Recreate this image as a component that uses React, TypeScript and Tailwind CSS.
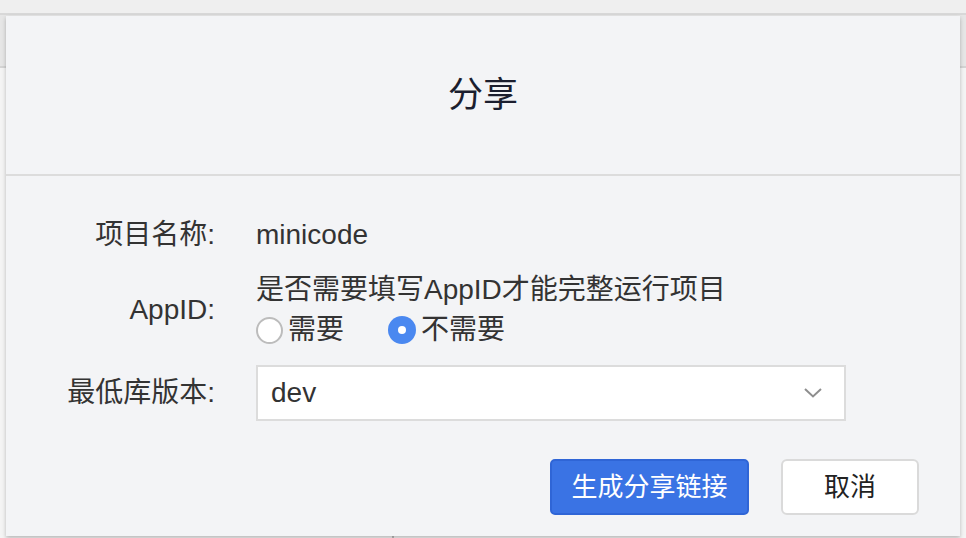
import { useState } from "react";

const font = { fontFamily: '"Liberation Sans", "Noto Sans CJK SC", sans-serif' };

export default function App() {
    const [need, setNeed] = useState(false);

    return (
        <div className="relative h-[538px] w-full overflow-hidden bg-[#f4f4f4]" style={font}>
            {/* page behind the dialog */}
            <div className="h-[15px] bg-[#efefef] border-b-2 border-[#d8d8d8]" />
            <div className="h-[53px] bg-[#e6e6e6] border-b-2 border-[#d4d4d4]" />
            <div className="absolute left-[392px] bottom-0 h-[4px] w-[2px] bg-[#bdbdbd]" />

            {/* dialog */}
            <div className="absolute left-[6px] top-[16px] w-[954px] h-[520px] bg-[#f3f4f6] shadow-[0_2px_4px_rgba(0,0,0,0.25)] flex flex-col">
                <div className="h-[160px] flex items-center justify-center border-b-2 border-[#dcdcdc]">
                    <h2 className="text-[35px] text-[#1b1e2e] leading-none pb-[2px]">分享</h2>
                </div>

                <div className="pt-[39px] grid grid-cols-[209px_1fr] gap-x-[41px] gap-y-[15px] text-[28px] text-[#333333] leading-[40px]">
                    <div className="text-right">项目名称:</div>
                    <div>minicode</div>

                    <div className="text-right self-center">AppID:</div>
                    <div>
                        <div>是否需要填写AppID才能完整运行项目</div>
                        <div className="flex items-center h-[40px]">
                            <button className="flex items-center gap-[5px]" onClick={() => setNeed(true)}>
                                {need ? (
                                    <span className="w-[27px] h-[27px] rounded-full bg-[#4a88f0] flex items-center justify-center">
                                        <span className="w-[8px] h-[8px] rounded-full bg-white" />
                                    </span>
                                ) : (
                                    <span className="w-[27px] h-[27px] rounded-full bg-white border-2 border-[#bcbcbc]" />
                                )}
                                <span>需要</span>
                            </button>
                            <button className="flex items-center gap-[5px] ml-[44px]" onClick={() => setNeed(false)}>
                                {!need ? (
                                    <span className="w-[28px] h-[28px] rounded-full bg-[#4a88f0] flex items-center justify-center">
                                        <span className="w-[8px] h-[8px] rounded-full bg-white" />
                                    </span>
                                ) : (
                                    <span className="w-[27px] h-[27px] rounded-full bg-white border-2 border-[#bcbcbc]" />
                                )}
                                <span>不需要</span>
                            </button>
                        </div>
                    </div>

                    <div className="text-right self-center">最低库版本:</div>
                    <div className="w-[590px] h-[56px] bg-white border-2 border-[#dcdcdc] flex items-center justify-between pl-[13px] pr-[22px]">
                        <span>dev</span>
                        <svg width="18" height="10" viewBox="0 0 18 10" fill="none">
                            <path d="M1 1l8 7.5L17 1" stroke="#8e8e8e" strokeWidth="2" />
                        </svg>
                    </div>
                </div>

                <div className="mt-[38px] flex justify-end gap-[32px] pr-[41px]">
                    <button className="w-[199px] h-[56px] rounded-[5px] bg-[#3a73e4] border-2 border-[#2f65d6] text-white text-[26px]">
                        生成分享链接
                    </button>
                    <button className="w-[138px] h-[56px] rounded-[6px] bg-white border-2 border-[#dadada] text-[#222222] text-[26px]">
                        取消
                    </button>
                </div>
            </div>
        </div>
    );
}
